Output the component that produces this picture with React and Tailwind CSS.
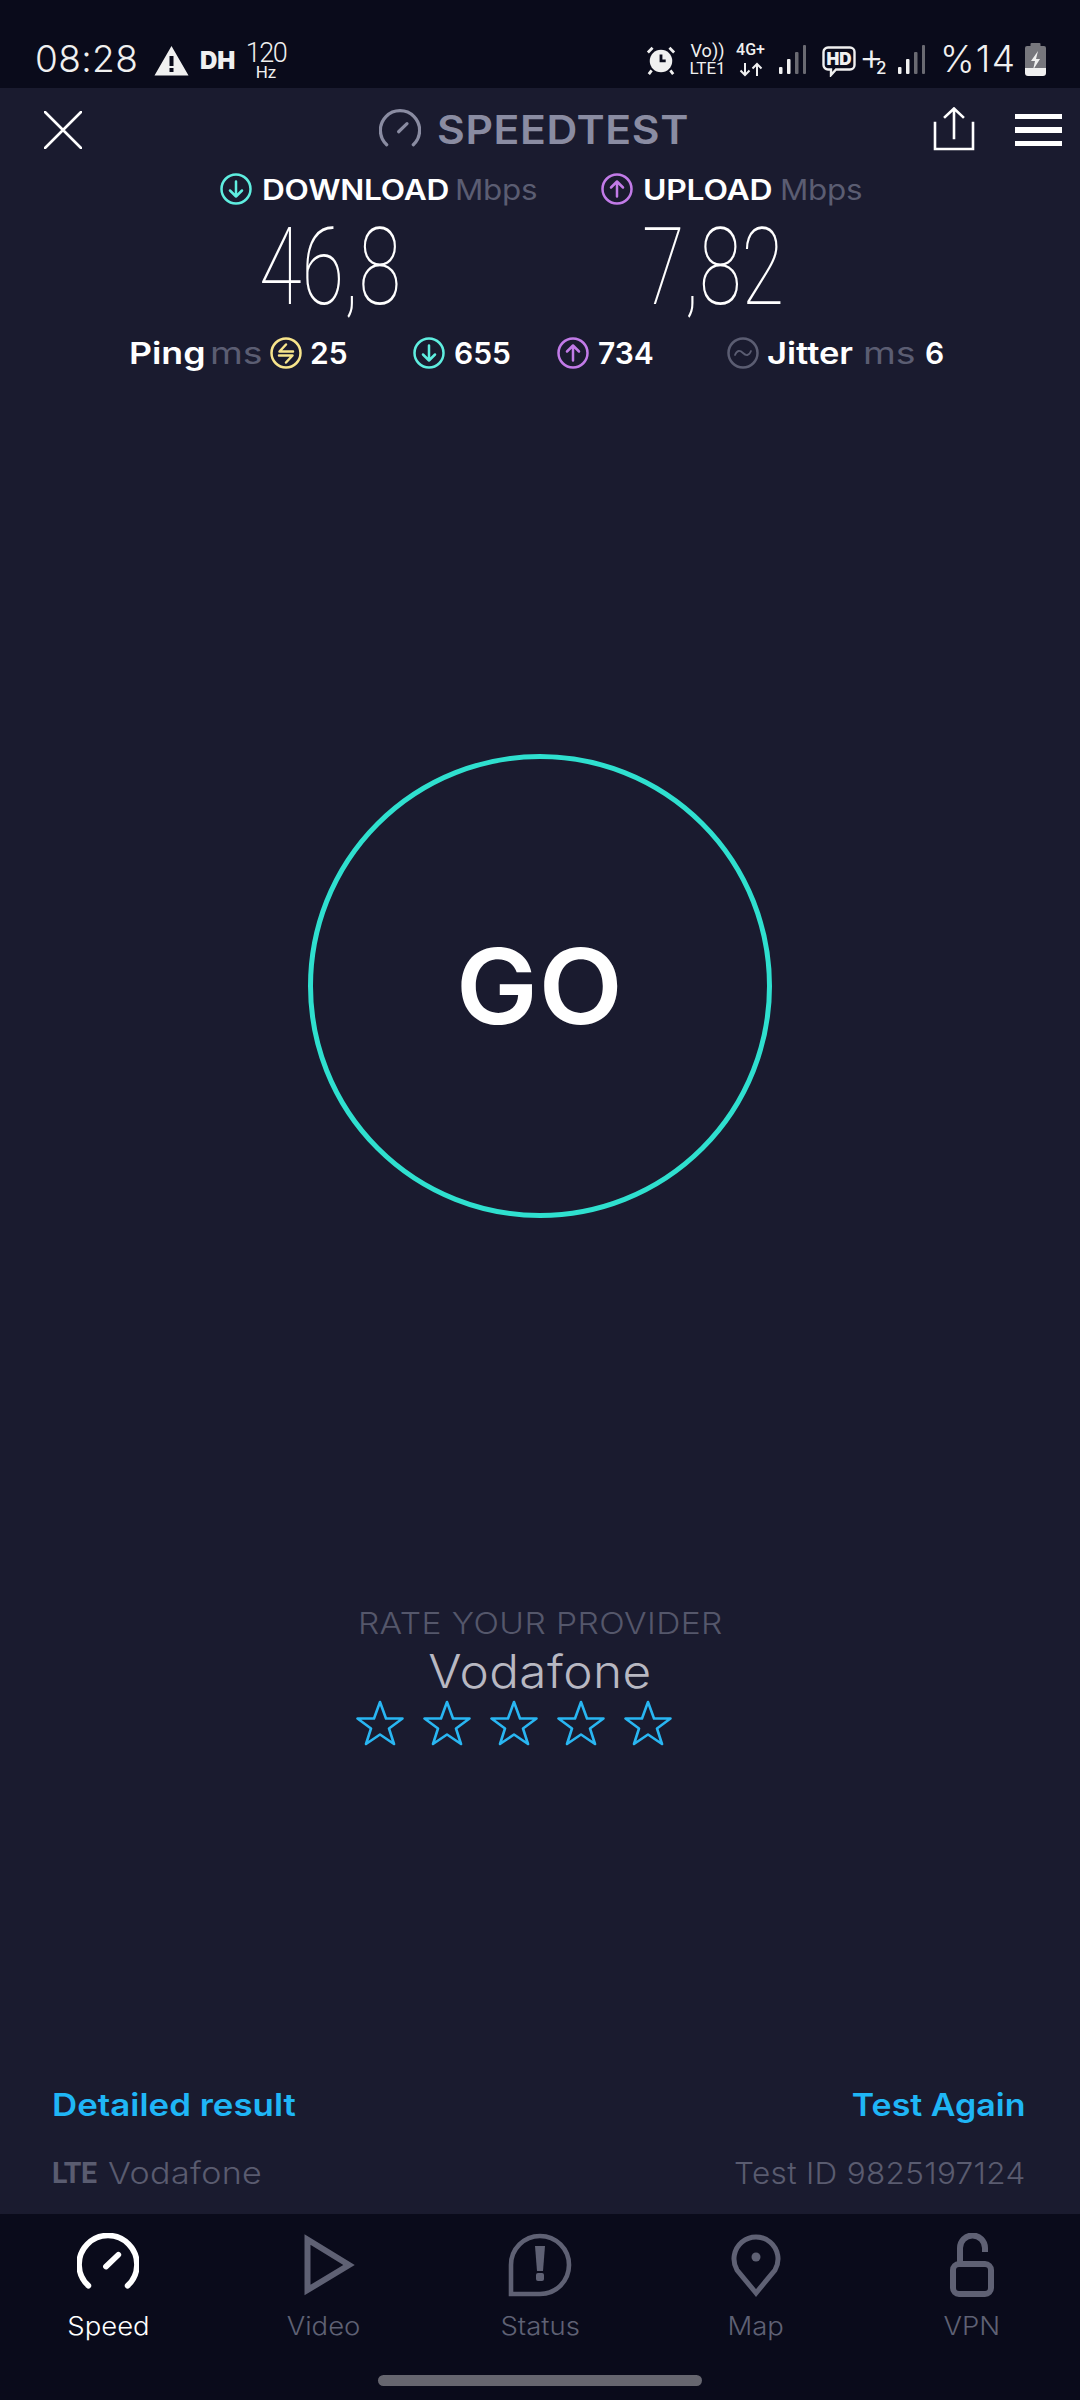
const sans = { fontFamily: 'Inter, "Noto Sans", sans-serif' };

function Ring({ color, children }) {
  return (
    <svg width="32" height="32" viewBox="0 0 32 32" fill="none" stroke={color} strokeWidth="2.5" strokeLinecap="round" strokeLinejoin="round" className="shrink-0">
      <circle cx="16" cy="16" r="14.5" />
      {children}
    </svg>
  );
}
const Down = ({ color }) => (
  <Ring color={color}><path d="M16 8.500v15M10 17.500l6 6 6-6" /></Ring>
);
const Up = ({ color }) => (
  <Ring color={color}><path d="M16 23.500v-15M10 14.500l6-6 6 6" /></Ring>
);

function Gauge({ size, width, color }) {
  return (
    <svg width={size} height={size} viewBox="0 0 60 60" fill="none" stroke={color} strokeWidth={width} strokeLinecap="round" className="shrink-0">
      <path d="M11 51A28 28 0 1 1 49 51" />
      <path d="M28 32.500L40 21" />
    </svg>
  );
}

function Star() {
  return (
    <svg width="48" height="46" viewBox="0 0 48 46" fill="none" stroke="#29b6f2" strokeWidth="2.600" strokeLinejoin="round" className="shrink-0">
      <path d="M24 2l6 16.500h16.500L33 28.500 38 44 24 34.500 10 44l5-15.500L1.500 18.500H18z" />
    </svg>
  );
}

function Bars() {
  return (
    <svg width="27" height="30" viewBox="0 0 27 30" className="block">
      <rect x="0" y="22" width="3.500" height="7" rx="1" fill="#f2f2f2" />
      <rect x="8" y="14" width="3.500" height="15" rx="1" fill="#f2f2f2" />
      <rect x="16" y="7" width="3.500" height="22" rx="1" fill="#6a6a72" />
      <rect x="24" y="0" width="3" height="29" rx="1" fill="#6a6a72" />
    </svg>
  );
}

function StatusBar() {
  return (
    <div className="h-[88px] shrink-0 bg-[#0a0b1b] flex items-start justify-between pl-[35px] pr-[34px] pt-[41px] text-[#f0f0f0]">
      <div className="flex items-start">
        <span className="w-[104px] text-[37px] leading-[36px] font-light tracking-[0.4px]">08:28</span>
        <svg width="35" height="31" viewBox="0 0 35 31" className="ml-[15px] mt-[4px] shrink-0">
          <path fillRule="evenodd" fill="#f0f0f0" d="M17.500 1L34.500 30.500H0.500ZM15.500 11h4v10h-4ZM15.500 23h4v4h-4Z" />
        </svg>
        <span className="ml-[11px] mt-[8px] w-[36px] text-[24px] leading-[23px] font-black">DH</span>
        <span className="ml-[10px] flex flex-col items-center w-[40px]" style={{ fontFamily: 'Roboto, sans-serif' }}>
          <span className="text-[27px] leading-[22px] mt-[1px] font-light tracking-[-1.500px]">120</span>
          <span className="text-[17px] leading-[15px] mt-[1px] font-normal">Hz</span>
        </span>
      </div>
      <div className="flex items-start">
        <svg width="30" height="32" viewBox="0 0 32 32" className="mt-[3px] shrink-0">
          <circle cx="16" cy="17" r="12" fill="#f0f0f0" />
          <path d="M16 10v7h5" fill="none" stroke="#0a0c1c" strokeWidth="3" />
          <path d="M2 8l5-5M30 8l-5-5M6 27l-3 4M26 27l3 4" stroke="#f0f0f0" strokeWidth="3" />
        </svg>
        <span className="ml-[12px] flex flex-col items-center w-[39px]" style={{ fontFamily: 'Roboto, sans-serif' }}>
          <span className="text-[18px] leading-[19px] font-normal">Vo))</span>
          <span className="text-[17px] leading-[16px] font-normal">LTE1</span>
        </span>
        <span className="ml-[8px] flex flex-col items-center w-[31px]" style={{ fontFamily: 'Roboto, sans-serif' }}>
          <span className="text-[16px] leading-[18px] font-medium">4G+</span>
          <svg width="24" height="15" viewBox="0 0 24 15" fill="none" stroke="#f0f0f0" strokeWidth="2" className="mt-[3px]">
            <path d="M6 1v12M1.500 8.500L6 13l4.500-4.500M18 14V2M13.500 6.500L18 2l4.500 4.500" />
          </svg>
        </span>
        <span className="ml-[13px] mt-[4px] shrink-0"><Bars /></span>
        <svg width="34" height="31" viewBox="0 0 34 31" className="ml-[16px] mt-[5px] shrink-0">
          <path d="M6 1.500h22a4.500 4.500 0 0 1 4.500 4.500v13a4.500 4.500 0 0 1-4.500 4.500H14l-5 5.500v-5.500H6a4.500 4.500 0 0 1-4.500-4.500V6a4.500 4.500 0 0 1 4.500-4.500Z" fill="none" stroke="#f0f0f0" strokeWidth="2.400" />
          <text x="17" y="19" textAnchor="middle" fontSize="17" fontWeight="900" fill="#f0f0f0">HD</text>
        </svg>
        <span className="ml-[3px] -mt-[3px] w-[17px] text-[38px] leading-[36px] font-light">+</span>
        <span className="w-[9px] mt-[18px] text-[17px] leading-[19px] font-medium">2</span>
        <span className="ml-[13px] mt-[4px] shrink-0"><Bars /></span>
        <span className="ml-[15px] w-[80px] text-[37px] leading-[36px] font-light tracking-[1.200px] whitespace-nowrap">%14</span>
        <svg width="21" height="33" viewBox="0 0 21 33" className="ml-[5px] mt-[2px] shrink-0">
          <rect x="5.500" y="0" width="10" height="4" rx="1" fill="#77777d" />
          <path d="M2 3h17a2 2 0 0 1 2 2v20H0V5a2 2 0 0 1 2-2Z" fill="#77777d" />
          <path d="M0 25h21v5a3 3 0 0 1-3 3H3a3 3 0 0 1-3-3Z" fill="#f0f0f0" />
          <path d="M13 8l-7 10h4l-2 9 7-11h-4Z" fill="#f0f0f0" />
        </svg>
      </div>
    </div>
  );
}

function Header() {
  return (
    <div className="h-[84px] shrink-0 flex items-center pl-[44px]">
      <svg width="38" height="38" viewBox="0 0 38 38" stroke="#ffffff" strokeWidth="2.600" strokeLinecap="round" className="shrink-0">
        <path d="M1 1l36 36M37 1L1 37" />
      </svg>
      <div className="ml-[297px] flex items-center w-[320px]">
        <Gauge size={42} width={4.600} color="#8a8ca2" />
        <span className="ml-[16px] origin-left scale-x-[1.095] text-[39px] leading-[44px] font-semibold text-[#8a8ca2] tracking-[0.55px]">SPEEDTEST</span>
      </div>
      <svg width="42" height="44" viewBox="0 0 42 44" fill="none" stroke="#ffffff" strokeWidth="2.600" strokeLinecap="square" className="ml-[234px] -mt-[3px] shrink-0">
        <path d="M21 31V2M12 10l9-8.500 9 8.500" />
        <path d="M2 16v26h38V16" />
      </svg>
      <div className="ml-[40px] flex flex-col gap-[8px] w-[47px]">
        <div className="h-[5.500px] bg-white" />
        <div className="h-[5.500px] bg-white" />
        <div className="h-[5.500px] bg-white" />
      </div>
    </div>
  );
}

function Readouts() {
  return (
    <div className="-mt-[5px] shrink-0 flex flex-col text-white">
      <div className="h-[44px] flex items-center pl-[220px] text-[28px]">
        <Down color="#5feee0" />
        <span className="ml-[10px] mt-[2px] w-[193px] origin-left scale-x-[1.13] font-semibold tracking-[-0.2px]">DOWNLOAD</span>
        <span className="mt-[2px] w-[146px] origin-left scale-x-[1.12] font-normal text-[#5b5d72] tracking-[-0.2px]">Mbps</span>
        <Up color="#c27be8" />
        <span className="ml-[10px] mt-[2px] w-[137px] origin-left scale-x-[1.14] font-semibold tracking-[-0.2px]">UPLOAD</span>
        <span className="mt-[2px] origin-left scale-x-[1.12] font-normal text-[#5b5d72] tracking-[-0.2px]">Mbps</span>
      </div>
      <div className="h-[112px] flex pl-[130px]" style={{ fontFamily: 'Roboto, sans-serif' }}>
        <div className="w-[400px] flex justify-center items-center text-[108px] leading-[112px] font-thin scale-x-[0.72]">46,8</div>
        <div className="w-[366px] flex justify-center items-center text-[108px] leading-[112px] font-thin scale-x-[0.72]">7,82</div>
      </div>
      <div className="mt-[8px] h-[44px] flex items-center pl-[129px] text-[30px] font-semibold">
        <span className="w-[81px] origin-left scale-x-[1.19]">Ping</span>
        <span className="w-[60px] origin-left scale-x-[1.25] font-normal text-[#5b5d72]">ms</span>
        <Ring color="#f8e58c"><path d="M23 14.500H9.500l6.500-7M9 18.500h13.500l-6.500 7" /></Ring>
        <span className="ml-[8px] w-[103px]">25</span>
        <Down color="#5feee0" />
        <span className="ml-[9px] w-[103px]">655</span>
        <Up color="#c27be8" />
        <span className="ml-[9px] w-[129px]">734</span>
        <Ring color="#5b5d72"><path d="M8 18c2-5 5-5 8-2s6 3 8-2" strokeWidth="1.800" /></Ring>
        <span className="ml-[8px] w-[96px] origin-left scale-x-[1.15]">Jitter</span>
        <span className="w-[62px] origin-left scale-x-[1.25] font-normal text-[#5b5d72]">ms</span>
        <span>6</span>
      </div>
    </div>
  );
}

function GoButton() {
  return (
    <div className="mt-[379px] self-center w-[464px] h-[464px] shrink-0 rounded-full border-[5px] border-[#2fe0cf] flex items-center justify-center">
      <span className="text-[104px] leading-[104px] font-semibold text-white scale-x-[1.05] tracking-[1px]">GO</span>
    </div>
  );
}

function RateProvider() {
  return (
    <div className="mt-[387px] shrink-0 flex flex-col items-center">
      <span className="text-[30px] leading-[36px] font-light text-[#55576b] scale-x-[1.117] tracking-[0.4px]">RATE YOUR PROVIDER</span>
      <span className="mt-[2px] text-[46px] leading-[56px] font-light text-[#b8b8c2] scale-x-[1.075] tracking-[0.4px]">Vodafone</span>
      <div className="-ml-[53px] mt-[1px] flex gap-[19px]">
        <Star /><Star /><Star /><Star /><Star />
      </div>
    </div>
  );
}

function Footer() {
  return (
    <div className="mt-auto shrink-0 pl-[52px] pr-[54px] pb-[21px] flex flex-col gap-[28px]">
      <div className="flex justify-between text-[31px] leading-[40px] font-semibold text-[#1fb6f6]">
        <span className="origin-left scale-x-[1.125]">Detailed result</span>
        <span className="origin-right scale-x-[1.096]">Test Again</span>
      </div>
      <div className="flex justify-between items-center text-[30px] leading-[40px] font-light text-[#5a5c70]">
        <span className="flex items-center">
          <span className="w-[56px] origin-left scale-x-[0.95] font-bold text-[30px] tracking-[-0.5px]" style={{ fontFamily: 'Roboto, sans-serif' }}>LTE</span>
          <span className="origin-left scale-x-[1.135] tracking-[0.3px]">Vodafone</span>
        </span>
        <span className="origin-right scale-x-[1.05] tracking-[0.3px]">Test ID 9825197124</span>
      </div>
    </div>
  );
}

function NavItem({ label, active, children }) {
  return (
    <div className="flex flex-col items-center">
      <div className="h-[68px] flex items-center justify-center">{children}</div>
      <span className={`mt-[11px] text-[25px] leading-[32px] font-light scale-x-[1.1] ${active ? 'text-white' : 'text-[#5f6174]'}`}>{label}</span>
    </div>
  );
}

function BottomNav() {
  const grey = '#5f6174';
  return (
    <div className="h-[186px] shrink-0 bg-[#0a0b1b] flex flex-col">
      <div className="grid grid-cols-5 pt-[17px]">
        <NavItem label="Speed" active>
          <span className="-mt-[3px]"><Gauge size={62} width={5.500} color="#ffffff" /></span>
        </NavItem>
        <NavItem label="Video">
          <svg width="52" height="62" viewBox="0 0 52 62" fill="none" stroke={grey} strokeWidth="6" className="shrink-0 ml-[12px]">
            <path d="M3.500 5.500V56L45 31Z" />
          </svg>
        </NavItem>
        <NavItem label="Status">
          <svg width="64" height="64" viewBox="0 0 64 64" fill="none" stroke={grey} strokeWidth="4.600" className="shrink-0">
            <path d="M3 61V32A29 29 0 1 1 32 61Z" />
            <path d="M27 13h10l-2 25h-6Z" fill={grey} stroke="none" />
            <rect x="28" y="40" width="8" height="8" rx="2" fill={grey} stroke="none" />
          </svg>
        </NavItem>
        <NavItem label="Map">
          <svg width="50" height="64" viewBox="0 0 50 64" fill="none" stroke={grey} strokeWidth="5" className="shrink-0">
            <path d="M25 60L6 37A22 22 0 1 1 44 37Z" strokeLinejoin="miter" />
            <circle cx="25" cy="24" r="4.500" fill={grey} stroke="none" />
          </svg>
        </NavItem>
        <NavItem label="VPN">
          <svg width="44" height="64" viewBox="0 0 44 64" fill="none" stroke={grey} strokeWidth="6" className="shrink-0">
            <path d="M10 29V15a12.500 12.500 0 0 1 25 0v4" />
            <rect x="3" y="31" width="38" height="30" rx="6" />
          </svg>
        </NavItem>
      </div>
      <div className="mt-auto mb-[14px] self-center w-[324px] h-[11px] rounded-full bg-[#66666f]" />
    </div>
  );
}

export default function App() {
  return (
    <div className="w-[1080px] h-[2400px] overflow-hidden bg-[#1a1b2f] flex flex-col" style={sans}>
      <StatusBar />
      <Header />
      <Readouts />
      <GoButton />
      <RateProvider />
      <Footer />
      <BottomNav />
    </div>
  );
}
